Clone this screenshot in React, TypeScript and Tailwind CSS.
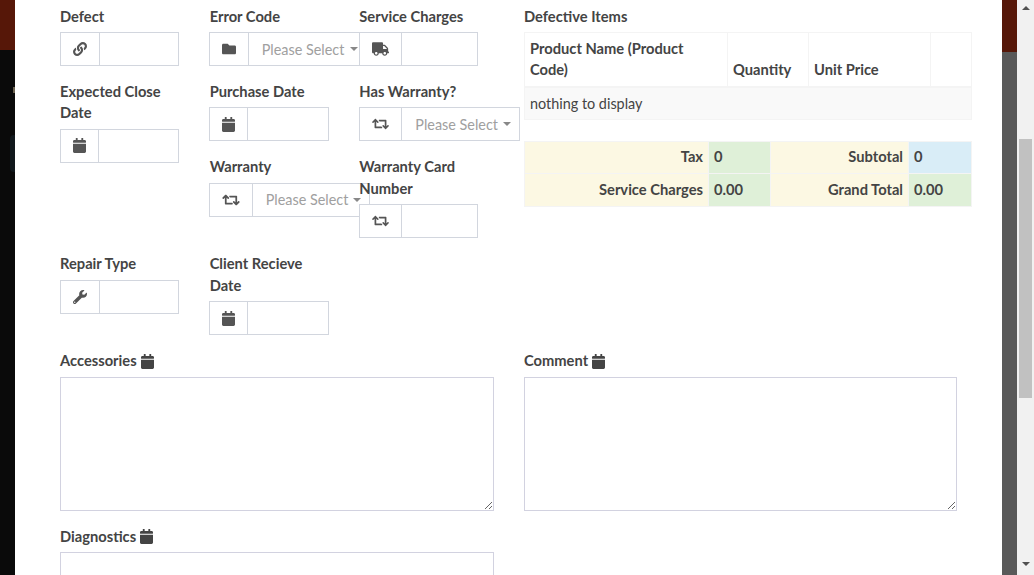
import type { ReactNode } from "react";
import { FaCalendar, FaFolder, FaLink, FaRetweet, FaTruck, FaWrench } from "react-icons/fa";

type FieldProps = {
  label: string;
  icon: ReactNode;
  select?: string;
  className?: string;
  group?: string;
};

// select holds the width class of the dropdown, no select means a plain input
function Field({ label, icon, select, className = "", group = "w-[119px]" }: FieldProps) {
  return (
    <div className={className}>
      <label className="block text-[14.7px] font-bold text-[#444]">{label}</label>
      <div className={`mt-[5px] flex h-[34px] ${group}`}>
        <span className="flex shrink-0 items-center justify-center border border-[#d2d6de] bg-white px-3 text-[#555]">
          {icon}
        </span>
        {select ? (
          <div className={`-ml-px flex shrink-0 items-center justify-between border border-[#d2d6de] bg-white pl-[13px] pr-2 text-[#a0a0a0] ${select}`}>
            <span>Please Select</span>
            <span className="h-0 w-0 border-x-4 border-t-4 border-x-transparent border-t-[#888]" />
          </div>
        ) : (
          <input className="-ml-px min-w-0 flex-1 border border-[#d2d6de] bg-white" />
        )}
      </div>
    </div>
  );
}

function NoteLabel({ children }: { children: string }) {
  return (
    <label className="flex items-center gap-1 text-[14.7px] font-bold text-[#444]">
      {children}
      <FaCalendar className="h-[15px] w-[13px] text-[#444]" />
    </label>
  );
}

const calendar = <FaCalendar className="h-[15px] w-[13px]" />;
const retweet = <FaRetweet className="h-[14px] w-[17px]" />;

export default function App() {
  return (
    <div className="flex h-[575px] w-[1034px] overflow-hidden bg-white font-['Lato',sans-serif] text-[14.4px] leading-[21.43px] text-[#444]">
      {/* backdrop left */}
      <div className="w-[15px] shrink-0 bg-[#0a0a0a]">
        <div className="h-[50px] bg-[#561708]" />
        <div className="ml-[13px] mt-[37px] h-[6px] bg-[#6b6250]" />
        <div className="ml-[10px] mt-[42px] h-[37px] rounded-l bg-[#11181c]" />
      </div>

      {/* modal */}
      <main className="w-[987px] shrink-0 px-[45px] pt-[6px]">
        <div className="flex gap-[30px]">
          <div className="grid h-[329.4px] w-[434px] shrink-0 grid-cols-[149.67px_149.67px_134.66px] grid-rows-[75px_75.4px_97px_auto]">
            <Field label="Defect" icon={<FaLink className="h-[14px] w-[14px]" />} />
            <Field label="Error Code" icon={<FaFolder className="h-[14px] w-[14px]" />} select="w-[119px]" group="-ml-px w-[120px]" />
            <Field label="Service Charges" icon={<FaTruck className="h-[14px] w-[17px]" />} />
            <Field label="Expected Close Date" icon={calendar} className="row-span-2 w-[119.67px]" />
            <Field label="Purchase Date" icon={calendar} group="-ml-px w-[120px]" />
            <Field label="Has Warranty?" icon={retweet} select="w-[119px]" />
            <Field label="Warranty" icon={<FaRetweet className="h-[14px] w-[18px]" />} select="w-[118px]" className="col-start-2" group="-ml-px w-[120px]" />
            <Field label="Warranty Card Number" icon={retweet} className="w-[119.67px]" />
            <Field label="Repair Type" icon={<FaWrench className="h-[14px] w-[14px]" />} />
            <Field label="Client Recieve Date" icon={calendar} className="w-[119.67px]" group="-ml-px w-[120px]" />
          </div>

          <div className="w-[448px] shrink-0">
            <label className="block text-[14.7px] font-bold">Defective Items</label>
            <table className="mt-[5px] w-full table-fixed border-collapse border border-[#f4f4f4]">
              <colgroup>
                <col className="w-[203px]" />
                <col className="w-[81px]" />
                <col className="w-[122px]" />
                <col />
              </colgroup>
              <thead>
                <tr className="border-b-2 border-[#f4f4f4] text-left align-bottom text-[14.7px] font-bold leading-[21px]">
                  <th className="border border-[#f4f4f4] px-[5px] pb-[6px] pt-[5px]">Product Name (Product Code)</th>
                  <th className="border border-[#f4f4f4] px-[5px] pb-[6px] pt-[5px]">Quantity</th>
                  <th className="border border-[#f4f4f4] px-[5px] pb-[6px] pt-[5px]">Unit Price</th>
                  <th className="border border-[#f4f4f4] px-[5px] pb-[6px] pt-[5px]" />
                </tr>
              </thead>
              <tbody>
                <tr className="bg-[#f9f9f9]">
                  <td colSpan={4} className="border border-[#f4f4f4] px-[5px] pb-[4px] pt-[5px]">nothing to display</td>
                </tr>
              </tbody>
            </table>

            <table className="mt-[21px] w-full table-fixed border-collapse border border-[#f4f4f4] text-[14.7px] font-bold">
              <colgroup>
                <col className="w-[184px]" />
                <col className="w-[61.5px]" />
                <col className="w-[138.5px]" />
                <col />
              </colgroup>
              <tbody>
                <tr className="h-[32.5px]">
                  <td className="border border-[#f4f4f4] bg-[#fcf8e3] px-[5px] pb-[2px] text-right">Tax</td>
                  <td className="border border-[#f4f4f4] bg-[#dff0d8] px-[5px] pb-[2px]">0</td>
                  <td className="border border-[#f4f4f4] bg-[#fcf8e3] px-[5px] pb-[2px] text-right">Subtotal</td>
                  <td className="border border-[#f4f4f4] bg-[#d9edf7] px-[5px] pb-[2px]">0</td>
                </tr>
                <tr className="h-[32.5px]">
                  <td className="border border-[#f4f4f4] bg-[#fcf8e3] px-[5px] text-right">Service Charges</td>
                  <td className="border border-[#f4f4f4] bg-[#dff0d8] px-[5px]">0.00</td>
                  <td className="border border-[#f4f4f4] bg-[#fcf8e3] px-[5px] text-right">Grand Total</td>
                  <td className="border border-[#f4f4f4] bg-[#dff0d8] px-[5px]">0.00</td>
                </tr>
              </tbody>
            </table>
          </div>
        </div>

        <div className="mt-[15px] grid grid-cols-[434px_433px] gap-x-[30px]">
          <div>
            <NoteLabel>Accessories</NoteLabel>
            <textarea className="mt-[5px] block h-[134px] w-full border border-[#d2d2e0] bg-white" />
          </div>
          <div>
            <NoteLabel>Comment</NoteLabel>
            <textarea className="mt-[5px] block h-[134px] w-full border border-[#d2d2e0] bg-white" />
          </div>
          <div className="mt-[15px]">
            <NoteLabel>Diagnostics</NoteLabel>
            <textarea className="mt-[5px] block h-[134px] w-full border border-[#d2d2e0] bg-white" />
          </div>
        </div>
      </main>

      {/* backdrop right */}
      <div className="w-[15px] shrink-0 bg-[#595959]">
        <div className="h-[52px] bg-[#561708]" />
      </div>

      {/* scrollbar */}
      <div className="flex w-[17px] shrink-0 flex-col items-center bg-[#f1f1f1]">
        <span className="mt-[6px] h-0 w-0 border-x-4 border-b-4 border-x-transparent border-b-[#505050]" />
        <div className="mt-[129px] h-[259px] w-[13px] bg-[#c1c1c1]" />
        <span className="mt-[164px] h-0 w-0 border-x-4 border-t-4 border-x-transparent border-t-[#505050]" />
      </div>
    </div>
  );
}
